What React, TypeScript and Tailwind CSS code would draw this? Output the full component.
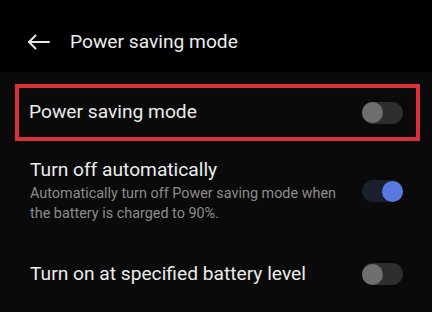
// Power saving mode settings screen

type ToggleProps = { on?: boolean }

function Toggle({ on = false }: ToggleProps) {
  return (
    <div
      className={`flex h-[22px] w-[41px] shrink-0 items-center rounded-full ${
        on ? 'justify-end bg-[#1c1f2e]' : 'justify-start bg-[#2e2e2e]'
      }`}
    >
      <div className={`h-[21px] w-[21px] rounded-full ${on ? 'bg-[#5a78e2]' : 'bg-[#6e6e6e]'}`} />
    </div>
  )
}

function BackArrow() {
  return (
    <svg width="23" height="16" viewBox="0 0 23 16" fill="none" stroke="#e8e8e8" strokeWidth="2" strokeLinecap="round" strokeLinejoin="round">
      <path d="M22 8H2" />
      <path d="M8.5 1.5L2 8l6.5 6.5" />
    </svg>
  )
}

export default function App() {
  return (
    <div className="flex h-[312px] w-[432px] flex-col bg-[#0a0a0a] font-['Roboto',sans-serif] text-[#ececec]">
      <header className="flex h-[72px] items-center bg-black pl-[27px] pt-[12px]">
        <BackArrow />
        <h1 className="ml-[20px] text-[19.2px] leading-none">Power saving mode</h1>
      </header>

      <div className="ml-[15px] mr-[12px] mt-[12px] flex h-[57px] items-center justify-between border-[4px] border-[#d8313c] pl-[10px] pr-[13px]">
        <span className="text-[19.2px]">Power saving mode</span>
        <Toggle />
      </div>

      <div className="flex items-center justify-between pl-[30px] pr-[29px] pt-[17px]">
        <div>
          <div className="text-[19.2px] leading-[24px]">Turn off automatically</div>
          <div className="mt-[2px] text-[14.4px] leading-[20px] text-[#8c8c8c]">
            Automatically turn off Power saving mode when
            <br />
            the battery is charged to 90%.
          </div>
        </div>
        <div>
          <Toggle on />
        </div>
      </div>

      <div className="flex items-center justify-between pl-[30px] pr-[29px] pt-[36px]">
        <span className="text-[19.2px]">Turn on at specified battery level</span>
        <Toggle />
      </div>
    </div>
  )
}
